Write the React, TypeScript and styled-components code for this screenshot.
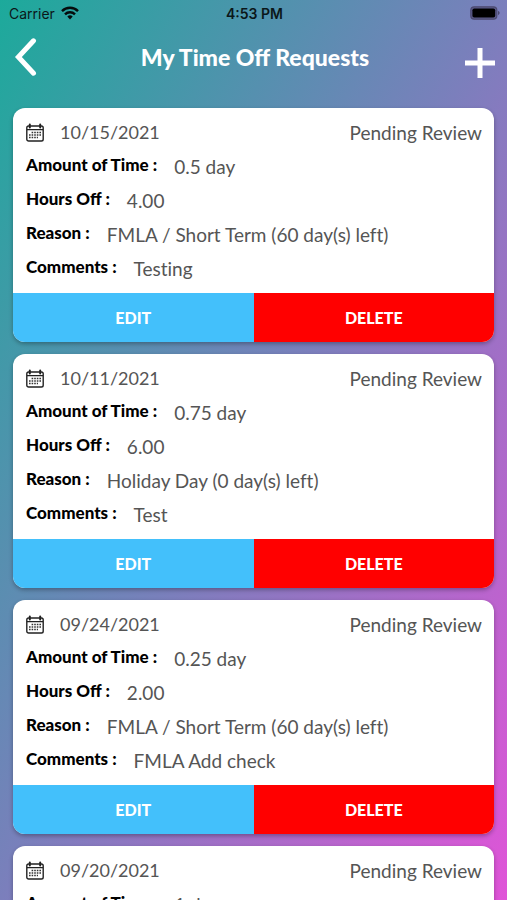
import React from "react";
import styled, { createGlobalStyle } from "styled-components";

const GlobalStyle = createGlobalStyle`
  *, *::before, *::after { box-sizing: border-box; }
  body { margin: 0; font-family: Lato, "Open Sans", sans-serif; }
  button { font: inherit; border: 0; padding: 0; cursor: pointer; }
`;

const Screen = styled.div`
  height: 100vh;
  display: flex;
  flex-direction: column;
  overflow: hidden;
  background: linear-gradient(to bottom right, #1caa9b 0%, #7b7fbc 50%, #e054d8 100%);
`;

const StatusBar = styled.div`
  flex: none;
  height: 28px;
  padding: 0 7px 2px 9px;
  display: grid;
  grid-template-columns: 1fr auto 1fr;
  align-items: center;
  font-family: Inter, sans-serif;
  font-size: 14px;
  color: #0b1719;
`;

const Carrier = styled.div`
  display: flex;
  align-items: center;
  gap: 6px;
`;

const Clock = styled.div`
  font-weight: 600;
`;

const Battery = styled.svg`
  justify-self: end;
`;

const Header = styled.header`
  flex: none;
  height: 66px;
  padding: 0 10px 8px 13px;
  display: grid;
  grid-template-columns: 34px 1fr 34px;
  align-items: center;
`;

const Title = styled.h1`
  margin: 0;
  text-align: center;
  font-size: 23px;
  line-height: 28px;
  font-weight: 900;
  color: #fff;
`;

const IconButton = styled.button`
  height: 44px;
  display: flex;
  align-items: center;
  background: none;
  color: #fff;
`;

const AddButton = styled(IconButton)`
  justify-content: center;
  align-items: flex-end;
`;

const List = styled.main`
  flex: 1;
  min-height: 0;
  overflow-y: auto;
  scrollbar-width: none;
  padding: 14px 13px 12px;
  display: flex;
  flex-direction: column;
  gap: 12px;
`;

const Card = styled.article`
  flex: none;
  border-radius: 12px;
  overflow: hidden;
  background: #fff;
  box-shadow: 0 2px 4px rgba(0, 0, 0, 0.3);
`;

const Details = styled.div`
  padding: 7px 12px 8px 13px;
`;

const Row = styled.div`
  height: 34px;
  display: flex;
  align-items: center;
  font-size: 19px;
  font-variant-ligatures: none;
  color: #555;
  white-space: nowrap;
`;

const DateText = styled.time`
  flex: 1;
  margin-left: 16px;
  font-size: 18px;
`;

const Fields = styled.dl`
  margin: 0;
`;

const Label = styled.dt`
  align-self: flex-start;
  font-size: 17px;
  line-height: 32px;
  font-weight: 900;
  font-variant-ligatures: normal;
  color: #000;
`;

const Value = styled.dd`
  margin: 0 0 0 17px;
`;

const Actions = styled.div`
  display: grid;
  grid-template-columns: 1fr 1fr;
`;

const Action = styled.button<{ $tone: "edit" | "delete" }>`
  height: 49px;
  font-size: 16px;
  font-weight: 900;
  color: #fff;
  background: ${(p) => (p.$tone === "edit" ? "#43c0fb" : "#ff0000")};
`;

const CalendarIcon = () => (
  <svg width="18" height="20" viewBox="0 0 18 20" fill="none" stroke="#222" aria-hidden="true">
    <rect x="0.8" y="4" width="16.4" height="15" rx="1.8" strokeWidth="1.4" />
    <path d="M1 7.6h16" strokeWidth="1.4" />
    <path d="M3.8 2.4v3M14.2 2.4v3" strokeWidth="2" strokeLinecap="round" />
    <path d="M5.6 10.4h10M3 13h12.6M3 15.6h9" stroke="#333" strokeWidth="1.5" strokeDasharray="1.6 1" />
  </svg>
);

const WifiIcon = () => (
  <svg width="18" height="14" viewBox="0 0 18 14" fill="none" stroke="#050b0c" strokeWidth="2.4" aria-hidden="true">
    <path d="M1 5.1a11.3 11.3 0 0 1 16 0" />
    <path d="M4 8.3a7 7 0 0 1 10 0" />
    <path d="M9 13.4l-2.7-2.9a3.8 3.8 0 0 1 5.4 0z" fill="#050b0c" stroke="none" />
  </svg>
);

const requests = [
  { date: "10/15/2021", amount: "0.5 day", hours: "4.00", reason: "FMLA / Short Term (60 day(s) left)", comments: "Testing" },
  { date: "10/11/2021", amount: "0.75 day", hours: "6.00", reason: "Holiday Day (0 day(s) left)", comments: "Test" },
  { date: "09/24/2021", amount: "0.25 day", hours: "2.00", reason: "FMLA / Short Term (60 day(s) left)", comments: "FMLA Add check" },
  { date: "09/20/2021", amount: "1 day", hours: "8.00", reason: "Holiday Day (0 day(s) left)", comments: "Test" },
];

const Field = ({ label, value }: { label: string; value: string }) => (
  <Row>
    <Label>{label} :</Label>
    <Value>{value}</Value>
  </Row>
);

export default function App() {
  return (
    <>
      <GlobalStyle />
      <Screen>
        <StatusBar>
          <Carrier>
            Carrier
            <WifiIcon />
          </Carrier>
          <Clock>4:53 PM</Clock>
          <Battery width="30" height="14" viewBox="0 0 30 14" aria-hidden="true">
            <rect x="0.8" y="0.8" width="26" height="12.4" rx="3.4" fill="#5d5c8c" stroke="#4c4a70" strokeWidth="1.2" />
            <rect x="2.4" y="2.4" width="22.8" height="9.2" rx="1.8" fill="#000" />
            <path d="M28 4.8q3.4 2.2 0 4.4z" fill="#4c4a70" />
          </Battery>
        </StatusBar>
        <Header>
          <IconButton type="button" aria-label="Back">
            <svg width="24" height="38" viewBox="0 0 24 38" fill="none" stroke="currentColor" strokeWidth="5" strokeLinecap="round" strokeLinejoin="miter">
              <path d="M20.5 2.8L5.4 19L20.5 35.2" />
            </svg>
          </IconButton>
          <Title>My Time Off Requests</Title>
          <AddButton type="button" aria-label="Add request">
            <svg width="32" height="32" viewBox="0 0 32 32" fill="none" stroke="currentColor" strokeWidth="5">
              <path d="M16 1v30M1 16h30" />
            </svg>
          </AddButton>
        </Header>
        <List>
          {requests.map((r) => (
            <Card key={r.date}>
              <Details>
                <Row>
                  <CalendarIcon />
                  <DateText>{r.date}</DateText>
                  <span>Pending Review</span>
                </Row>
                <Fields>
                  <Field label="Amount of Time" value={r.amount} />
                  <Field label="Hours Off" value={r.hours} />
                  <Field label="Reason" value={r.reason} />
                  <Field label="Comments" value={r.comments} />
                </Fields>
              </Details>
              <Actions>
                <Action type="button" $tone="edit">EDIT</Action>
                <Action type="button" $tone="delete">DELETE</Action>
              </Actions>
            </Card>
          ))}
        </List>
      </Screen>
    </>
  );
}
